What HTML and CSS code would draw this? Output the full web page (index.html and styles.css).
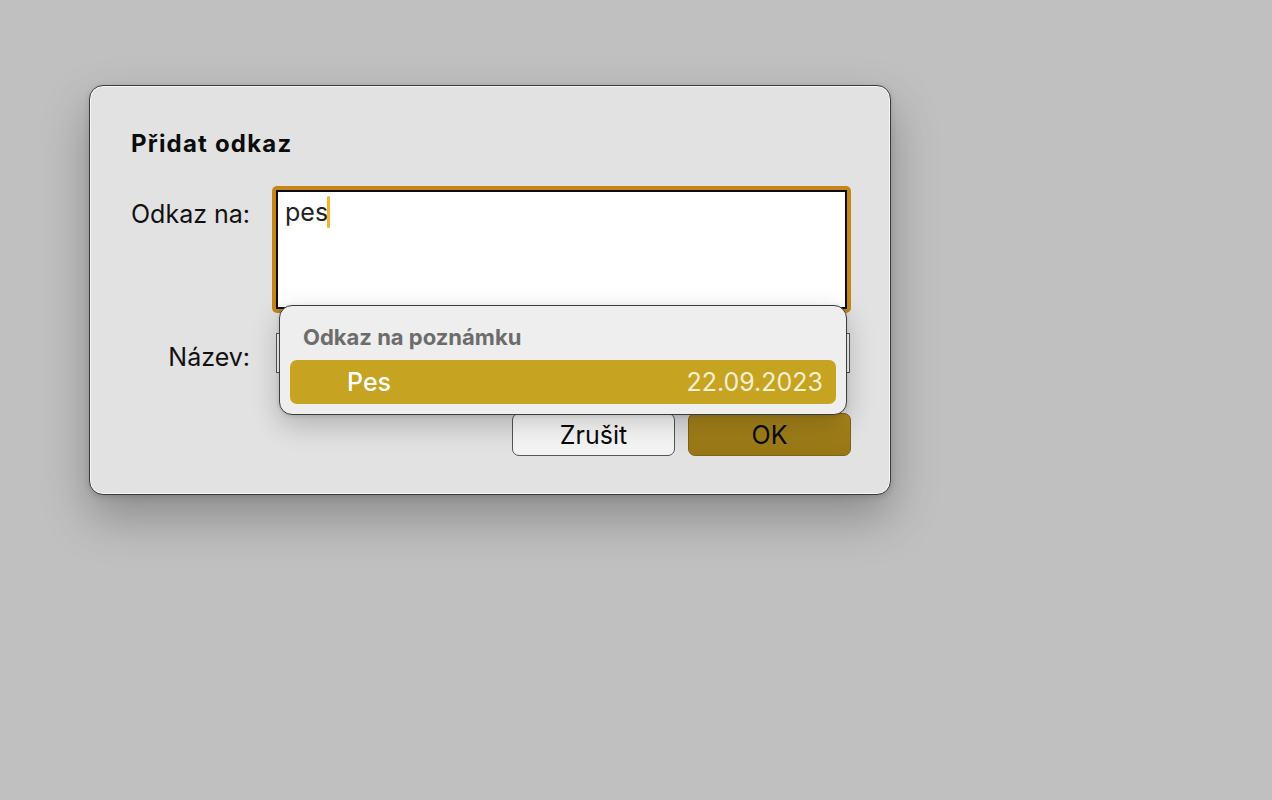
FILE: index.html
```html
<!DOCTYPE html>
<html lang="cs">
<head>
<meta charset="utf-8">
<title>Přidat odkaz</title>
<link rel="stylesheet" href="styles.css">
</head>
<body>
<div class="dialog">
  <h1 class="title">Přidat odkaz</h1>
  <div class="row row-link">
    <label class="label">Odkaz na:</label>
    <div class="ring">
      <div class="field field-big"><span class="val">pes</span><span class="caret"></span></div>
    </div>
  </div>
  <div class="row row-name">
    <label class="label">Název:</label>
    <div class="field field-small"></div>
  </div>
  <div class="buttons">
    <button class="btn btn-cancel">Zrušit</button>
    <button class="btn btn-ok">OK</button>
  </div>
  <div class="popup">
    <div class="popup-head">Odkaz na poznámku</div>
    <div class="popup-item">
      <span class="item-name">Pes</span>
      <span class="item-date">22.09.2023</span>
    </div>
  </div>
</div>
</body>
</html>
```

FILE: styles.css
```css
html, body {
  margin: 0;
  padding: 0;
  background: #c0c0c0;
  font-family: Inter, "Noto Sans", "Liberation Sans", sans-serif;
}
body {
  padding: 85px 0 0 89px;
  height: 800px;
  box-sizing: border-box;
}
.dialog {
  position: relative;
  width: 802px;
  height: 410px;
  box-sizing: border-box;
  background: #e2e2e2;
  border: 1.5px solid #3a3a3a;
  border-radius: 14px;
  box-shadow: inset 0 0 0 1px #f6f6f6, 0 22px 48px rgba(0,0,0,0.28), 0 2px 6px rgba(0,0,0,0.15);
  padding: 44px 39px 0 41px;
  display: flex;
  flex-direction: column;
}
.title {
  margin: 0;
  font-size: 24px;
  font-weight: 700;
  letter-spacing: 1.2px;
  line-height: 28px;
  color: #0c0c0c;
  height: 28px;
}
.row {
  display: flex;
  align-items: flex-start;
}
.row-link {
  margin-top: 28px;
}
.label {
  width: 119px;
  text-align: right;
  font-size: 25px;
  color: #111;
  flex: none;
  white-space: nowrap;
}
.row-link .label {
  text-align: left;
  line-height: 30px;
  padding-top: 13px;
  margin-right: 22px;
}
.ring {
  width: 582px;
  height: 127px;
  box-sizing: border-box;
  background: #c4851a;
  border-radius: 5px;
  padding: 4px;
}
.field {
  box-sizing: border-box;
  background: #fff;
}
.field-big {
  height: 100%;
  border: 2px solid #0c0c0c;
  padding: 5px 0 0 7px;
  display: flex;
  align-items: flex-start;
  font-size: 25px;
  line-height: 30px;
  color: #222;
}
.caret {
  display: inline-block;
  width: 3px;
  height: 32px;
  margin-top: -1px;
  margin-left: -1px;
  background: #f6b426;
  border-radius: 2px;
}
.row-name {
  margin-top: 20px;
  align-items: center;
}
.row-name .label {
  margin-right: 26px;
  line-height: 30px;
  padding-top: 8px;
}
.field-small {
  width: 574px;
  height: 40px;
  border: 1px solid #555;
}
.buttons {
  margin-top: 40px;
  display: flex;
  justify-content: flex-end;
  gap: 13px;
}
.btn {
  width: 163px;
  height: 43px;
  box-sizing: border-box;
  border-radius: 7px;
  font-family: inherit;
  font-size: 25px;
  color: #0a0a0a;
  padding: 0;
  line-height: 40px;
}
.btn-cancel {
  background: linear-gradient(#ffffff, #f2f2f2);
  border: 1px solid #555;
}
.btn-ok {
  background: linear-gradient(#ab871b, #977616);
  border: 1px solid #7f6414;
}
.popup {
  position: absolute;
  left: 189px;
  top: 219px;
  width: 568px;
  height: 110px;
  box-sizing: border-box;
  background: #eeeeee;
  border: 1px solid #3c3c3c;
  border-radius: 13px;
  box-shadow: 0 10px 28px rgba(0,0,0,0.22), 0 1px 4px rgba(0,0,0,0.12);
  padding: 17px 10px 0 10px;
  display: flex;
  flex-direction: column;
}
.popup-head {
  padding-left: 13px;
  font-size: 22px;
  font-weight: 700;
  color: #6c6c6c;
  line-height: 28px;
  height: 28px;
}
.popup-item {
  margin-top: 9px;
  height: 44px;
  border-radius: 7px;
  background: #c6a320;
  display: flex;
  align-items: center;
  justify-content: space-between;
  padding: 0 13px 0 57px;
  font-size: 25px;
}
.item-name {
  color: #fff;
  font-weight: 500;
}
.item-date {
  color: #f6efd2;
}
```
